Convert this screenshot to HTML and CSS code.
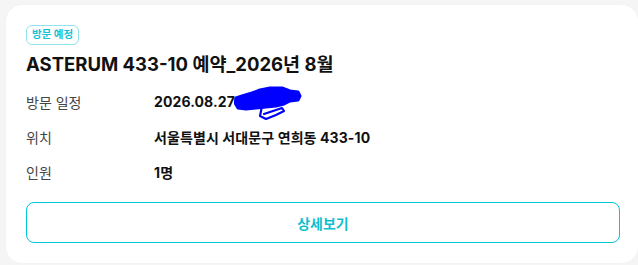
FILE: index.html
```html
<!DOCTYPE html>
<html lang="ko">
<head>
<meta charset="utf-8">
<link rel="stylesheet" href="styles.css">
</head>
<body>
<div class="card">
  <span class="badge">방문 예정</span>
  <h1 class="title">ASTERUM 433-10 예약_2026년 8월</h1>
  <div class="rows">
    <div class="label">방문 일정</div>
    <div class="value date">2026.08.27
      <svg class="scribble" width="70" height="36" viewBox="0 0 70 36">
        <path d="M2 12 L8 10 L18 7 L26 4 L36 2 L48 2 L56 5 L64 6 L66 10 L64 14 L56 15 L50 18 L42 20 L32 21 L22 22 L12 23 L4 22 L1 17 Z" fill="#0000ff" stroke="#0000ff" stroke-width="3" stroke-linejoin="round"/>
        <path d="M28 20 L26 30 L32 33 L42 29 L50 25 L48 22 L36 26 L30 28" fill="none" stroke="#0000ff" stroke-width="2.2" stroke-linecap="round" stroke-linejoin="round"/>
      </svg>
    </div>
    <div class="label">위치</div>
    <div class="value">서울특별시 서대문구 연희동 433-10</div>
    <div class="label">인원</div>
    <div class="value">1명</div>
  </div>
  <button class="detail-btn">상세보기</button>
</div>
</body>
</html>
```
FILE: styles.css
```css
html, body {
  margin: 0;
  padding: 0;
  background: #f5f5f5;
}
body {
  font-family: "Inter", "Noto Sans CJK KR", sans-serif;
  padding: 5px 0 0 6px;
  height: 265px;
  box-sizing: border-box;
  overflow: hidden;
}
.card {
  background: #ffffff;
  border-radius: 16px;
  width: 632px;
  height: 258px;
  box-sizing: border-box;
  padding: 20px 18px 20px 20px;
  display: flex;
  flex-direction: column;
  align-items: flex-start;
  box-shadow: 0 0 2px rgba(0,0,0,0.04);
}
.badge {
  display: inline-block;
  font-size: 10.5px;
  line-height: 18px;
  height: 18px;
  padding: 0 5px;
  color: #14c2d3;
  border: 1px solid #8fe3ea;
  border-radius: 6px;
  font-weight: 700;
}
.title {
  margin: 7px 0 0 0;
  font-size: 18.5px;
  line-height: 24px;
  font-weight: 700;
  color: #111111;
}
.rows {
  margin-top: 8px;
  display: grid;
  grid-template-columns: 128px 1fr;
  grid-auto-rows: 35px;
  align-items: center;
  width: 100%;
}
.label {
  font-size: 14px;
  color: #444444;
}
.value {
  font-size: 14px;
  font-weight: 700;
  color: #111111;
  letter-spacing: 0.1px;
}
.date {
  position: relative;
}
.scribble {
  position: absolute;
  left: 80px;
  top: -7px;
}
.detail-btn {
  margin-top: 13px;
  width: 594px;
  height: 41px;
  background: #ffffff;
  border: 1px solid #00c6d6;
  border-radius: 8px;
  color: #0fbfd0;
  font-family: "Inter", "Noto Sans CJK KR", sans-serif;
  font-size: 14px;
  font-weight: 700;
  padding: 0;
}
```
